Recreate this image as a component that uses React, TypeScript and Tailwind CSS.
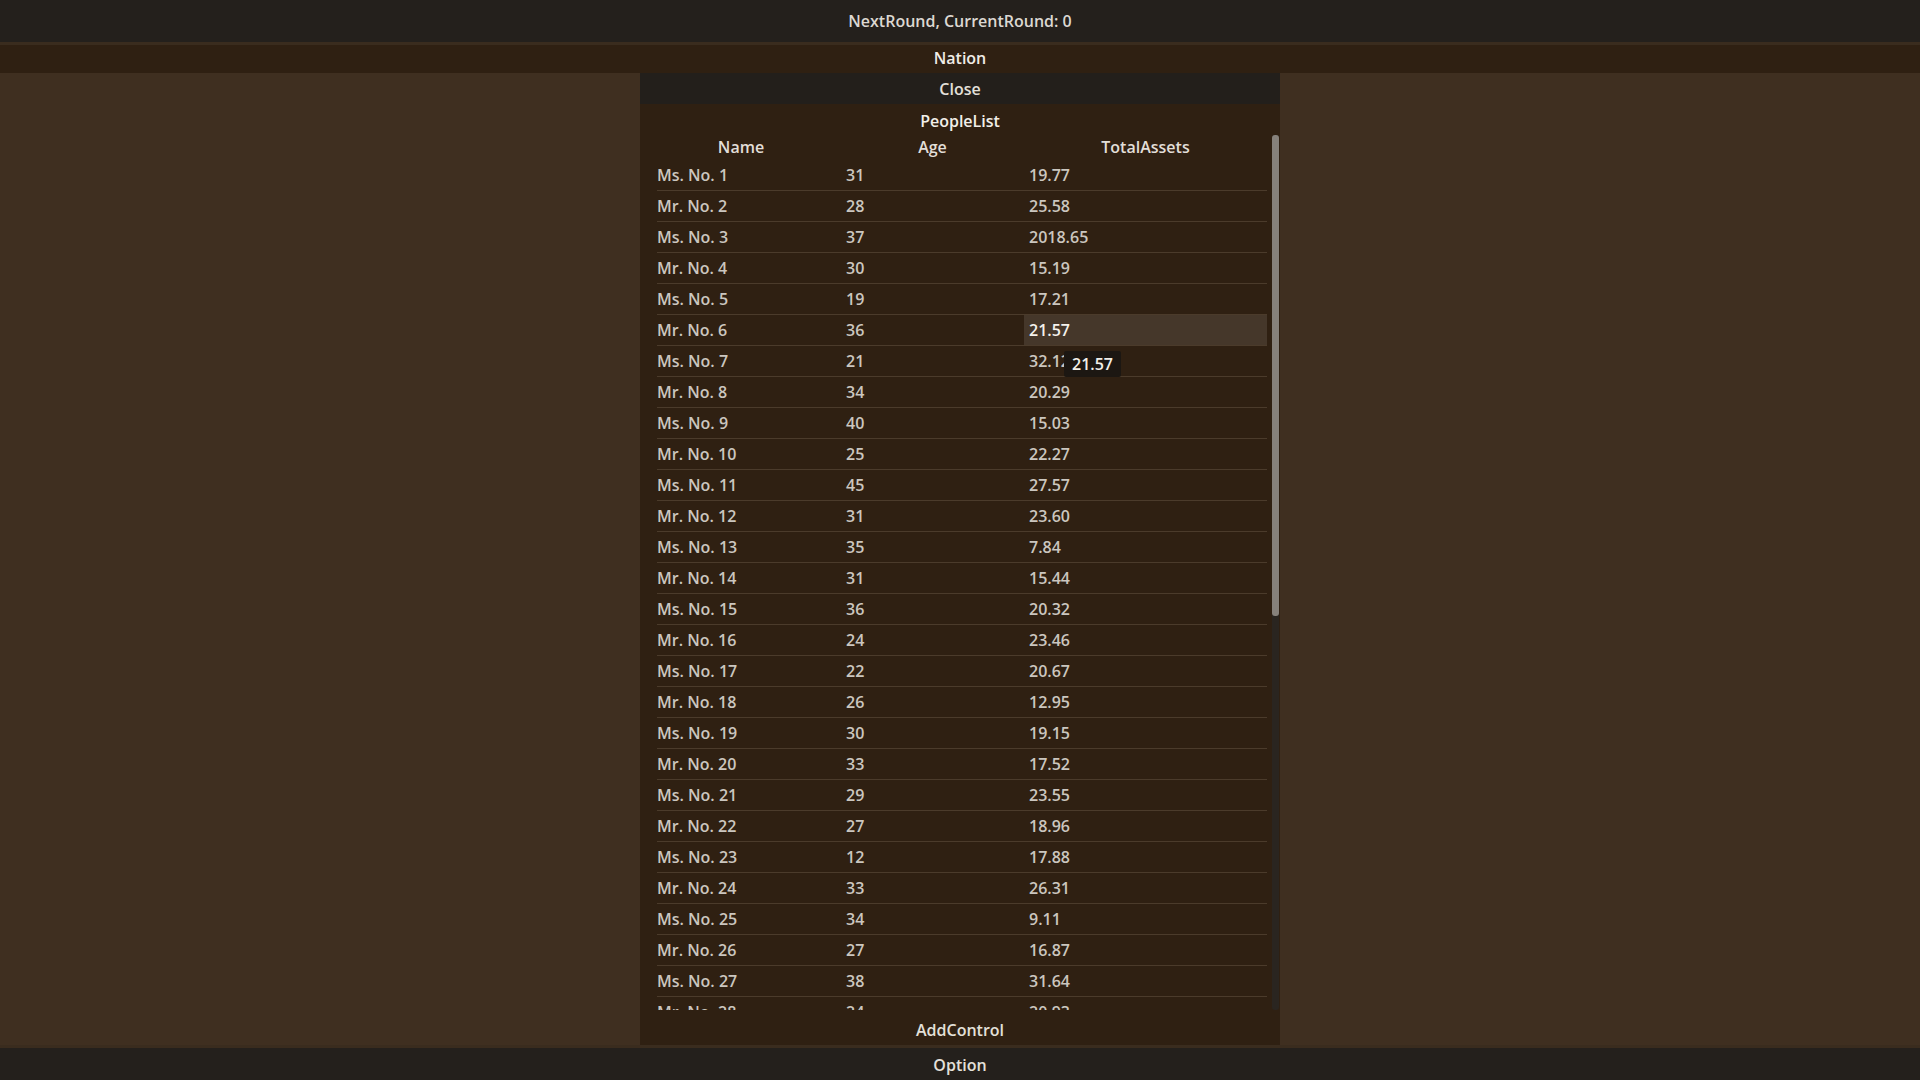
const people: [string, number, string][] = [
  ['Ms. No. 1', 31, '19.77'],
  ['Mr. No. 2', 28, '25.58'],
  ['Ms. No. 3', 37, '2018.65'],
  ['Mr. No. 4', 30, '15.19'],
  ['Ms. No. 5', 19, '17.21'],
  ['Mr. No. 6', 36, '21.57'],
  ['Ms. No. 7', 21, '32.12'],
  ['Mr. No. 8', 34, '20.29'],
  ['Ms. No. 9', 40, '15.03'],
  ['Mr. No. 10', 25, '22.27'],
  ['Ms. No. 11', 45, '27.57'],
  ['Mr. No. 12', 31, '23.60'],
  ['Ms. No. 13', 35, '7.84'],
  ['Mr. No. 14', 31, '15.44'],
  ['Ms. No. 15', 36, '20.32'],
  ['Mr. No. 16', 24, '23.46'],
  ['Ms. No. 17', 22, '20.67'],
  ['Mr. No. 18', 26, '12.95'],
  ['Ms. No. 19', 30, '19.15'],
  ['Mr. No. 20', 33, '17.52'],
  ['Ms. No. 21', 29, '23.55'],
  ['Mr. No. 22', 27, '18.96'],
  ['Ms. No. 23', 12, '17.88'],
  ['Mr. No. 24', 33, '26.31'],
  ['Ms. No. 25', 34, '9.11'],
  ['Mr. No. 26', 27, '16.87'],
  ['Ms. No. 27', 38, '31.64'],
  ['Mr. No. 28', 24, '20.93'],
  ['Ms. No. 29', 41, '18.40'],
  ['Mr. No. 30', 29, '22.05'],
]

const HOVER = 5

export default function App() {
  return (
    <div
      className="flex h-screen w-full flex-col overflow-hidden bg-[#3f2f20] text-[16px] font-semibold"
      style={{ fontFamily: '"Open Sans", "Noto Sans", sans-serif' }}
    >
      <div className="flex h-[42px] shrink-0 items-center justify-center bg-[#24201c] text-[#dcd8d2]">
        NextRound, CurrentRound: 0
      </div>
      <div className="h-[3px] shrink-0 bg-[#3a2c1e]" />
      <div className="flex h-[28px] shrink-0 items-center justify-center bg-[#2f2012] pb-[2px] text-[#f0ece6]">
        Nation
      </div>

      <div className="flex min-h-0 flex-1 justify-center">
        <div className="flex w-[640px] flex-col bg-[#2f2012]">
          <div className="flex h-[31px] shrink-0 items-center justify-center bg-[#231f1b] text-[#e4e0da]">
            Close
          </div>
          <div className="flex h-[31px] shrink-0 items-center justify-center pt-[2px] text-[#f2efe9]">
            PeopleList
          </div>

          <div className="flex min-h-0 flex-1">
            <div className="min-w-0 flex-1 overflow-hidden pl-[17px] pr-[5px]">
              <div className="grid h-[25px] grid-cols-[184px_183px_243px] items-center pb-[1px] text-[#e2ded8]">
                <div className="pr-4 text-center">Name</div>
                <div className="text-center">Age</div>
                <div className="text-center">TotalAssets</div>
              </div>
              {people.map(([name, age, assets], i) => (
                <div
                  key={name}
                  className="grid h-[31px] grid-cols-[184px_183px_243px] border-b border-[#4b3b2b] text-[#cbc6bf]"
                >
                  <div className="flex items-center">{name}</div>
                  <div className="flex items-center pl-[5px]">{age}</div>
                  <div
                    className={
                      i === HOVER
                        ? 'relative flex items-center bg-[#45372a] pl-[5px] text-[#f4f1ec]'
                        : 'flex items-center pl-[5px]'
                    }
                  >
                    {assets}
                    {i === HOVER && (
                      <div className="absolute left-[40px] top-[36px] z-10 flex h-[26px] items-center rounded-[2px] bg-[#1c1712] px-[8px] text-[#f2efe9]">
                        {assets}
                      </div>
                    )}
                  </div>
                </div>
              ))}
            </div>
            <div className="mr-[1px] w-[7px] shrink-0 rounded-[3px] bg-[#2a2520]">
              <div className="h-[481px] rounded-[3px] bg-[#86817b]" />
            </div>
          </div>

          <div className="flex h-[35px] shrink-0 items-center justify-center pt-[4px] text-[#e4e0da]">
            AddControl
          </div>
        </div>
      </div>

      <div className="h-[3px] shrink-0 bg-[#3a2c1e]" />
      <div className="flex h-[32px] shrink-0 items-center justify-center bg-[#24201c] pt-[2px] text-[#e4e0da]">
        Option
      </div>
    </div>
  )
}
